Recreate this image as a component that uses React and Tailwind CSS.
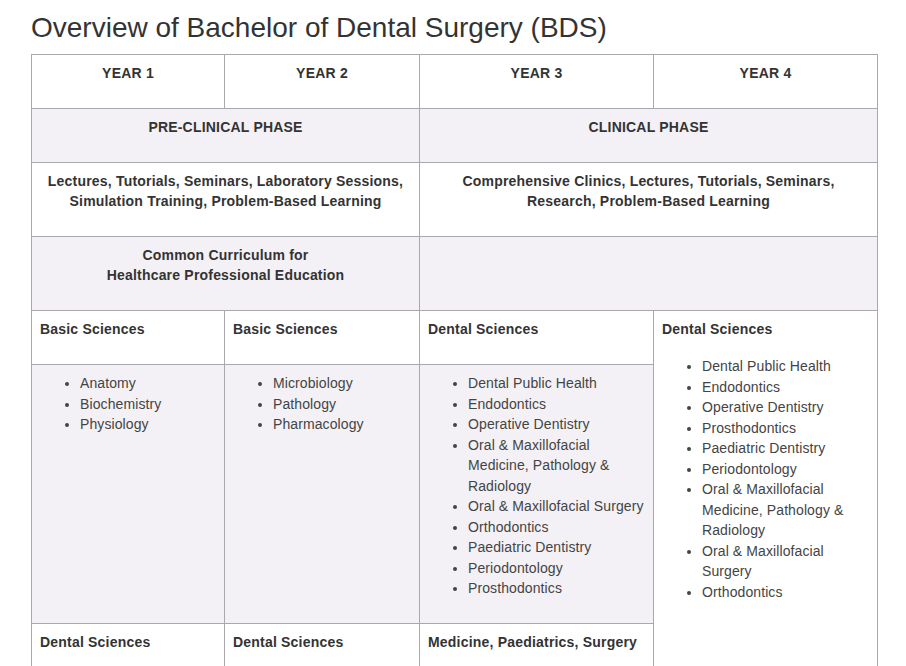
import React from 'react'

const year3List = [
  'Dental Public Health',
  'Endodontics',
  'Operative Dentistry',
  'Oral & Maxillofacial Medicine, Pathology & Radiology',
  'Oral & Maxillofacial Surgery',
  'Orthodontics',
  'Paediatric Dentistry',
  'Periodontology',
  'Prosthodontics',
]

const year4List = [
  'Dental Public Health',
  'Endodontics',
  'Operative Dentistry',
  'Prosthodontics',
  'Paediatric Dentistry',
  'Periodontology',
  'Oral & Maxillofacial Medicine, Pathology & Radiology',
  'Oral & Maxillofacial Surgery',
  'Orthodontics',
]

const cell = 'border border-[#aaa7ad] align-top px-2 pt-[8px] font-bold text-[14px] leading-5 tracking-[0.2px] text-[#333]'

const List = ({ items, className = '' }) => (
  <ul className={`list-disc pl-10 font-normal text-[#444] leading-[20.5px] tracking-[0.1px] ${className}`}>
    {items.map((item) => (
      <li key={item}>{item}</li>
    ))}
  </ul>
)

const App = () => {
  return (
    <div className="min-h-screen bg-white pl-[31px] pt-[9px] font-['Liberation_Sans',Arial,sans-serif]">
      <h1 className="text-[28px] leading-[38px] text-[#333] mb-[7px]">
        Overview of Bachelor of Dental Surgery (BDS)
      </h1>

      <table className="table-fixed border-collapse w-[846px]">
        <colgroup>
          <col className="w-[193px]" />
          <col className="w-[195px]" />
          <col className="w-[234px]" />
          <col className="w-[224px]" />
        </colgroup>
        <tbody>
          {/* years */}
          <tr className="h-[54px] bg-white">
            <td className={`${cell} text-center`}>YEAR 1</td>
            <td className={`${cell} text-center`}>YEAR 2</td>
            <td className={`${cell} text-center`}>YEAR 3</td>
            <td className={`${cell} text-center`}>YEAR 4</td>
          </tr>

          {/* phases */}
          <tr className="h-[54px] bg-[#f3f1f5]">
            <td colSpan={2} className={`${cell} text-center`}>PRE-CLINICAL PHASE</td>
            <td colSpan={2} className={`${cell} text-center`}>CLINICAL PHASE</td>
          </tr>

          {/* teaching methods */}
          <tr className="h-[74px] bg-white">
            <td colSpan={2} className={`${cell} text-center`}>
              Lectures, Tutorials, Seminars, Laboratory Sessions,<br />
              Simulation Training, Problem-Based Learning
            </td>
            <td colSpan={2} className={`${cell} text-center`}>
              Comprehensive Clinics, Lectures, Tutorials, Seminars,<br />
              Research, Problem-Based Learning
            </td>
          </tr>

          {/* common curriculum */}
          <tr className="h-[74px] bg-[#f3f1f5]">
            <td colSpan={2} className={`${cell} text-center`}>
              Common Curriculum for<br />
              Healthcare Professional Education
            </td>
            <td colSpan={2} className={cell}></td>
          </tr>

          {/* sciences heading */}
          <tr className="h-[54px]">
            <td className={`${cell} bg-white`}>Basic Sciences</td>
            <td className={`${cell} bg-white`}>Basic Sciences</td>
            <td className={`${cell} bg-white`}>Dental Sciences</td>
            <td rowSpan={3} className={`${cell} bg-white`}>
              Dental Sciences
              <List items={year4List} className="mt-[17px] pr-4" />
            </td>
          </tr>

          {/* course lists */}
          <tr className="h-[259px] bg-[#f3f1f5]">
            <td className={cell}>
              <List items={['Anatomy', 'Biochemistry', 'Physiology']} />
            </td>
            <td className={cell}>
              <List items={['Microbiology', 'Pathology', 'Pharmacology']} />
            </td>
            <td className={cell}>
              <List items={year3List} className="-mr-2" />
            </td>
          </tr>

          {/* final row */}
          <tr className="h-[54px] bg-white">
            <td className={cell}>Dental Sciences</td>
            <td className={cell}>Dental Sciences</td>
            <td className={cell}>Medicine, Paediatrics, Surgery</td>
          </tr>
        </tbody>
      </table>
    </div>
  )
}

export default App
